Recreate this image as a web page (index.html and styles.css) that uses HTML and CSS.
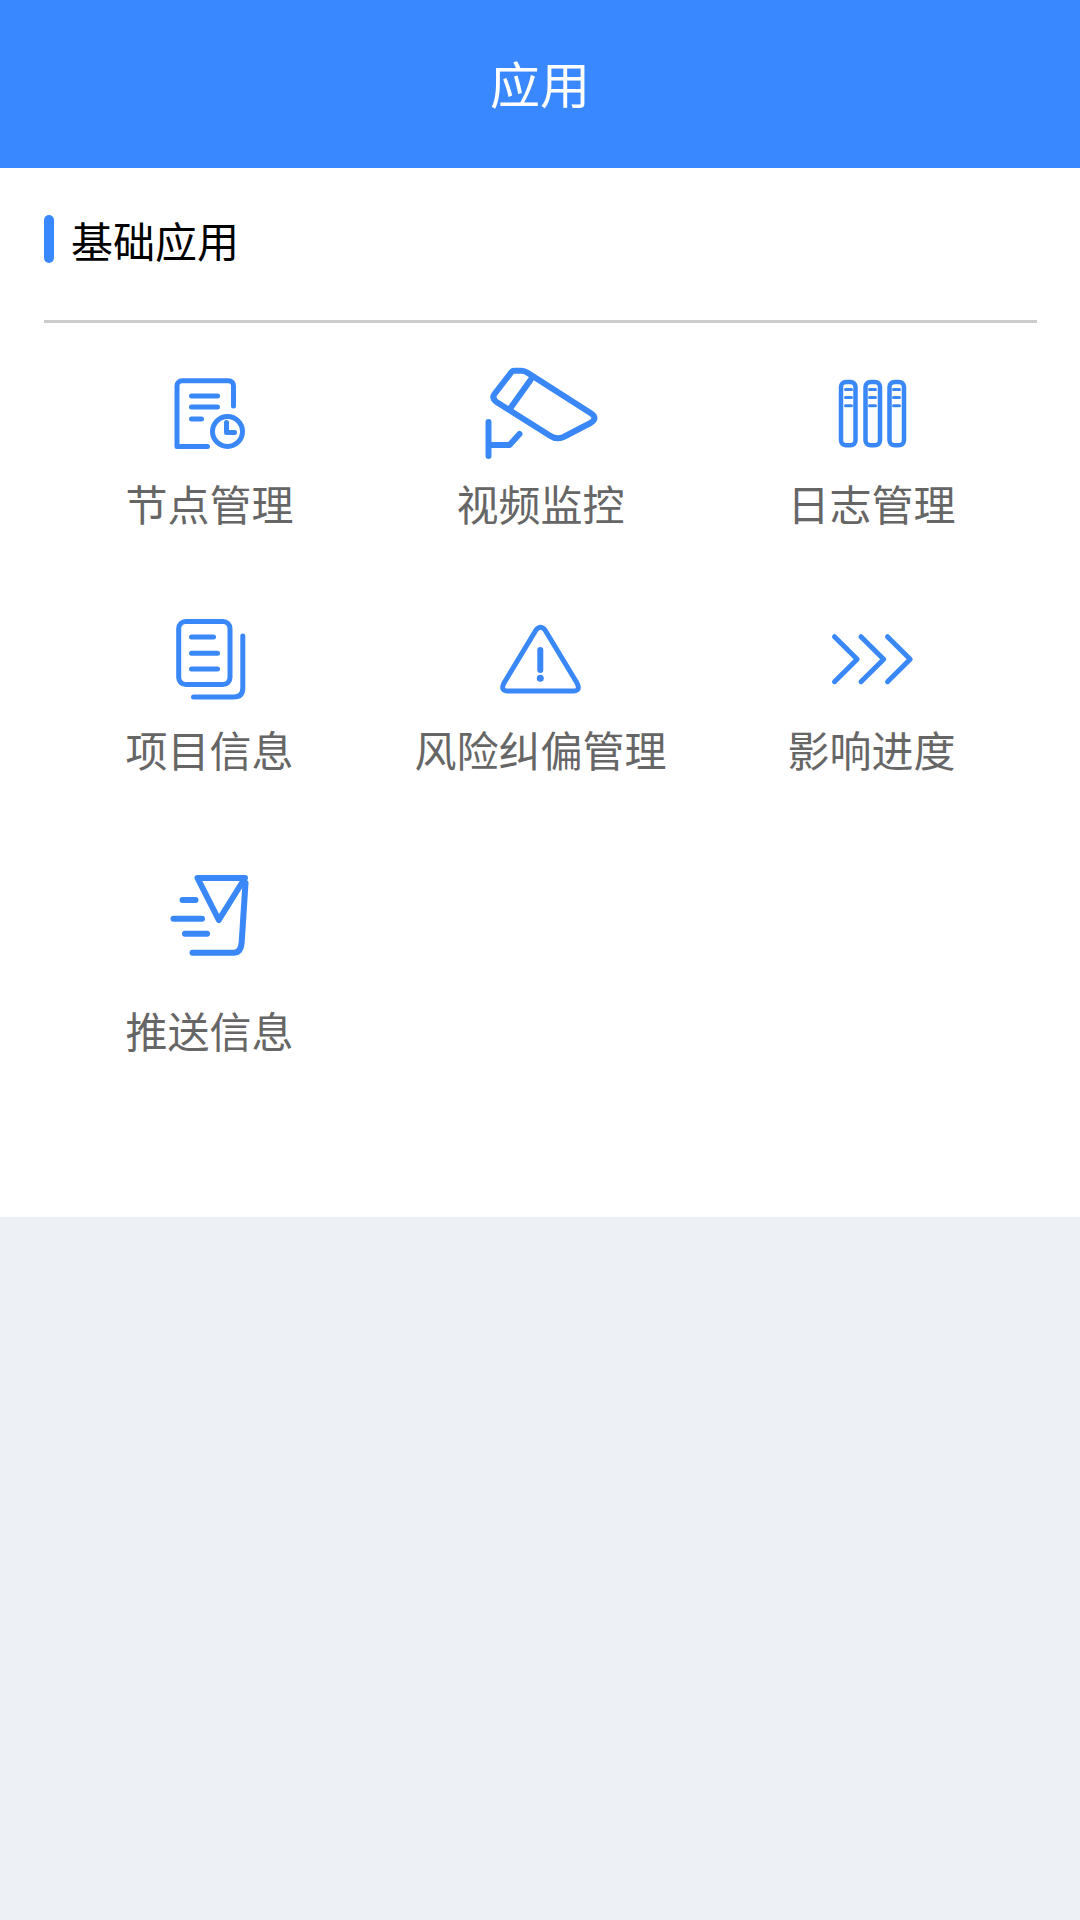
FILE: index.html

```html
<!DOCTYPE html>
<html lang="zh-CN">
<head>
  <meta charset="UTF-8" />
  <meta name="viewport" content="width=device-width, initial-scale=1.0"/>
  <title>应用</title>
  <link rel="stylesheet" href="styles.css">
</head>
<body>
  <header class="top-bar">应用</header>

  <section class="panel">
    <h2 class="section-title">基础应用</h2>

    <div class="app-grid">
      <a class="app-item">
        <svg class="icon" width="120" height="101" viewBox="149.5 360 120 101">
          <path d="M233 406V386a5 5 0 0 0-5-5.300H181.500a5 5 0 0 0-5 5v60.800H207"/>
          <path d="M191 396h26M191 407h26M191 419h10"/>
          <circle cx="227" cy="431.500" r="15"/>
          <path d="M226 422.500v10h8"/>
        </svg>
        <span class="app-name">节点管理</span>
      </a>
      <a class="app-item">
        <svg class="icon icon-heavy" width="120" height="101" viewBox="480.5 360 120 101">
          <path d="M514 370.700h7q3 0 6 2L590 413q8 5 0 10l-27 14q-7 3-13-1L496 402q-5-4-2-8l17-22q1-1.300 3-1.300z"/>
          <path d="M530 380l-20 28"/>
          <path d="M488 422v34M488 445h21l10-11"/>
        </svg>
        <span class="app-name">视频监控</span>
      </a>
      <a class="app-item">
        <svg class="icon" width="120" height="101" viewBox="811.5 360 120 101">
          <rect class="book" x="840.5" y="382" width="14.500" height="63.300" rx="5"/>
          <rect class="book" x="865" y="382" width="14.500" height="63.300" rx="5"/>
          <rect class="book" x="889" y="382" width="14.500" height="63.300" rx="5"/>
          <path class="thin" d="M845 389.500h6M845 397.500h6M845 405.700h6M869 389.500h6M869 397.500h6M869 405.700h6M893 389.500h6M893 397.500h6M893 405.700h6"/>
        </svg>
        <span class="app-name">日志管理</span>
      </a>

      <a class="app-item">
        <svg class="icon" width="120" height="112" viewBox="149.5 595 120 112">
          <rect x="178.200" y="621.500" width="51.300" height="63" rx="7"/>
          <path d="M191 637h22M191 653.300h26M191 669h26"/>
          <path d="M242.300 636v52q0 9-9 9H193"/>
        </svg>
        <span class="app-name">项目信息</span>
      </a>
      <a class="app-item">
        <svg class="icon" width="120" height="112" viewBox="481 595 120 112">
          <path d="M536 630q4.500-5.500 9 0l32 53q4 8-4 8h-65q-8 0-4-8z"/>
          <path class="bold" d="M540.300 650v20"/>
          <circle class="dot" cx="540.300" cy="678.300" r="3.500"/>
        </svg>
        <span class="app-name">风险纠偏管理</span>
      </a>
      <a class="app-item">
        <svg class="icon" width="120" height="112" viewBox="811.5 595 120 112">
          <path d="M834 636.700l22.700 22.600L834 681.700M860.500 636.700l22.700 22.600-22.700 22.400M887 636.700l22.700 22.600L887 681.700"/>
        </svg>
        <span class="app-name">影响进度</span>
      </a>

      <a class="app-item">
        <svg class="icon icon-heavy" width="120" height="147" viewBox="149.5 841 120 147">
          <path d="M197 878h47.500l-26.200 42z"/>
          <path d="M245 883l-3.800 59q-.7 10.700-8 10.700H192"/>
          <path d="M182 900h13M173 918.700h28.500M184.500 933.700h22"/>
        </svg>
        <span class="app-name">推送信息</span>
      </a>
    </div>
  </section>
</body>
</html>
```

FILE: styles.css

```css
* {
  box-sizing: border-box;
}

body {
  margin: 0;
  min-height: 1920px;
  background-color: #edf1f5;
  font-family: "Noto Sans CJK SC", "Noto Sans", sans-serif;
}

.top-bar {
  height: 168px;
  line-height: 164px;
  background: #3a88ff;
  color: #fff;
  font-size: 50px;
  text-align: center;
  box-shadow: 0 1px 2px #b9d5ff;
}

.panel {
  height: 1049px;
  padding: 47px 43px 0 44px;
  background: #fff;
}

.section-title {
  position: relative;
  height: 108px;
  margin: 0;
  padding-left: 27px;
  border-bottom: 3px solid #ccc;
  color: #000;
  font-size: 42px;
  font-weight: normal;
  line-height: 50px;
}

.section-title::before {
  content: "";
  position: absolute;
  left: 0;
  top: 0;
  width: 10px;
  height: 48px;
  border-radius: 5px;
  background: #3a88ff;
}

.app-grid {
  display: grid;
  grid-template-columns: repeat(3, 1fr);
  row-gap: 67px;
  padding-top: 37px;
}

.app-item {
  display: flex;
  flex-direction: column;
  align-items: center;
}

.icon {
  display: block;
  margin-bottom: 17px;
  fill: none;
  stroke: #3a88f8;
  stroke-width: 5;
  stroke-linecap: round;
  stroke-linejoin: round;
}

.icon-heavy {
  stroke-width: 6;
}

.icon .book {
  stroke-width: 4.5;
}

.icon .thin {
  stroke-width: 3;
}

.icon .bold {
  stroke-width: 6;
}

.icon .dot {
  fill: #3a88f8;
  stroke: none;
}

.app-name {
  color: #666;
  font-size: 42px;
  line-height: 50px;
  white-space: nowrap;
}
```
